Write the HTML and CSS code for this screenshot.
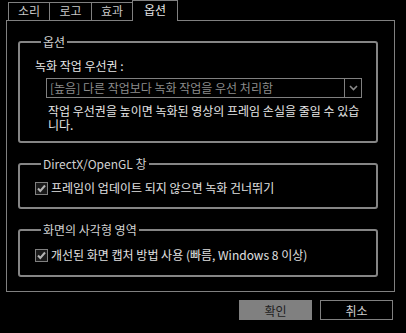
FILE: index.html
```html
<!DOCTYPE html>
<html>
<head>
    <meta charset="utf-8">
    <title>옵션</title>
    <link rel="stylesheet" href="styles.css">
</head>
<body>
    <div class="tabs">
        <div class="tab t1">소리</div>
        <div class="tab t2">로고</div>
        <div class="tab t3">효과</div>
        <div class="tab active">옵션</div>
    </div>

    <div class="panel">
        <fieldset class="group g1">
            <legend>옵션</legend>
            <div class="field-label">녹화 작업 우선권 :</div>
            <div class="select">
                <span class="select-text">[높음] 다른 작업보다 녹화 작업을 우선 처리함</span>
                <span class="select-btn">
                    <svg width="9" height="6" viewBox="0 0 9 6"><path d="M1 1 L4.5 4.5 L8 1" fill="none" stroke="#8a8a8a" stroke-width="1.6"/></svg>
                </span>
            </div>
            <p class="desc">작업 우선권을 높이면 녹화된 영상의 프레임 손실을 줄일 수 있습<br>니다.</p>
        </fieldset>

        <fieldset class="group g2">
            <legend>DirectX/OpenGL 창</legend>
            <label class="check">
                <span class="box"><svg width="11" height="11" viewBox="0 0 11 11"><path d="M2 5.5 L4.3 8 L9 2.5" fill="none" stroke="#b4b4b4" stroke-width="2"/></svg></span>
                프레임이 업데이트 되지 않으면 녹화 건너뛰기
            </label>
        </fieldset>

        <fieldset class="group g3">
            <legend>화면의 사각형 영역</legend>
            <label class="check">
                <span class="box"><svg width="11" height="11" viewBox="0 0 11 11"><path d="M2 5.5 L4.3 8 L9 2.5" fill="none" stroke="#b4b4b4" stroke-width="2"/></svg></span>
                개선된 화면 캡처 방법 사용 (빠름, Windows 8 이상)
            </label>
        </fieldset>
    </div>

    <div class="buttons">
        <button class="btn primary">확인</button>
        <button class="btn">취소</button>
    </div>
</body>
</html>
```

FILE: styles.css
```css
body {
    margin: 0;
    background: #000;
    color: #dcdcdc;
    font-family: "Noto Sans CJK KR", "Noto Sans", sans-serif;
    font-size: 12px;
    width: 406px;
    height: 333px;
    overflow: hidden;
}
.tabs {
    display: flex;
    align-items: flex-end;
    height: 20px;
    padding-left: 8px;
}
.tab {
    height: 17px;
    border: 1px solid #808080;
    border-bottom: none;
    margin-right: -1px;
    color: #c8c8c8;
    text-align: center;
    line-height: 16px;
    box-sizing: content-box;
}
.t1 { width: 40px; }
.t2 { width: 41px; }
.t3 { width: 40px; }
.tab.active {
    width: 44px;
    height: 20px;
    margin-bottom: -1px;
    background: #000;
    color: #e6e6e6;
    line-height: 18px;
    position: relative;
    z-index: 1;
}
.panel {
    margin: 0 11px 0 6px;
    border: 1px solid #808080;
    padding: 0 16px 15px 11px;
    height: 255px;
}
.group {
    margin: 0;
    border: 2px solid #858585;
    border-radius: 3px;
    padding: 0;
}
.group legend {
    margin-left: 6px;
    padding: 0 2px;
    line-height: 14px;
    color: #d2d2d2;
}
.g1 {
    margin-top: 14px;
    padding: 10px 0 9px 15px;
}
.field-label {
    line-height: 14px;
    color: #e6e6e6;
}
.select {
    display: flex;
    margin: 5px 14px 0 11px;
    height: 18px;
    border: 1px solid #808080;
}
.select-text {
    flex: 1;
    padding-left: 3px;
    line-height: 17px;
    color: #8c8c8c;
}
.select-btn {
    width: 16px;
    border-left: 1px solid #808080;
    display: flex;
    align-items: center;
    justify-content: center;
}
.desc {
    margin: 6px 0 0 13px;
    line-height: 14px;
    color: #e6e6e6;
    white-space: nowrap;
}
.g2 {
    margin-top: 14px;
    padding: 10px 0 12px 15px;
}
.g3 {
    margin-top: 14px;
    padding: 11px 0 13px 15px;
}
.check {
    display: flex;
    align-items: center;
    gap: 3px;
    line-height: 14px;
    color: #e0e0e0;
}
.box {
    width: 11px;
    height: 11px;
    border: 1px solid #808080;
    background: #1a1a1a;
    display: flex;
}
.buttons {
    display: flex;
    justify-content: flex-end;
    gap: 8px;
    margin: 8px 13px 0 0;
}
.btn {
    width: 73px;
    height: 20px;
    border: 1px solid #808080;
    background: #000;
    color: #cfcfcf;
    font-family: inherit;
    font-size: 12px;
    padding: 0;
}
.btn.primary {
    background: #808080;
    color: #1e1e1e;
}
```
